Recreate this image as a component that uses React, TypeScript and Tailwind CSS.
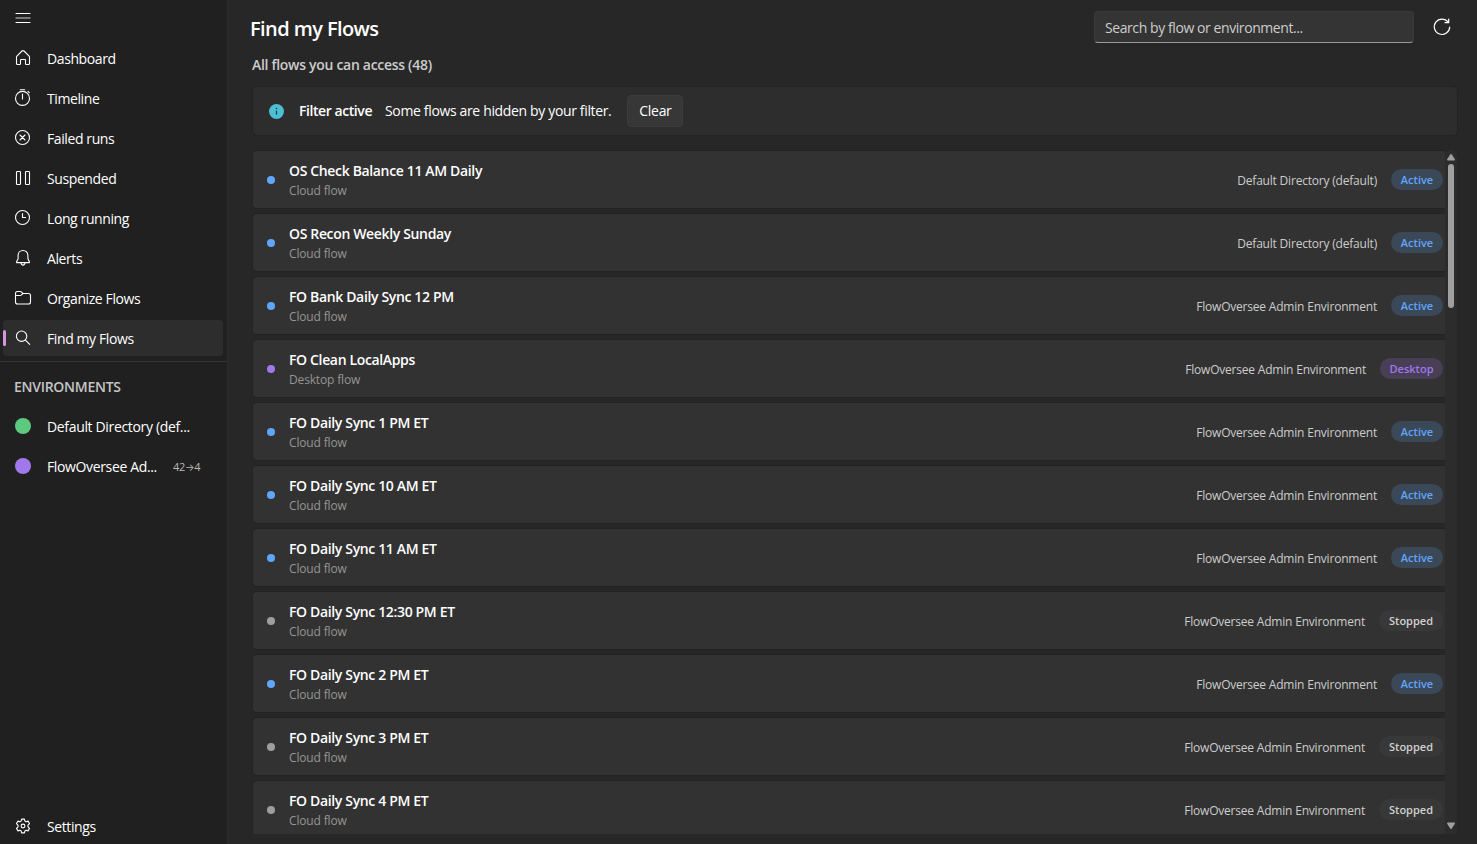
import type { ReactNode } from "react";

type FlowStatus = "Active" | "Stopped" | "Desktop";

interface Flow {
  name: string;
  environment: string;
  status: FlowStatus;
}

const ADMIN = "FlowOversee Admin Environment";

const flows: Flow[] = [
  { name: "OS Check Balance 11 AM Daily", environment: "Default Directory (default)", status: "Active" },
  { name: "OS Recon Weekly Sunday", environment: "Default Directory (default)", status: "Active" },
  { name: "FO Bank Daily Sync 12 PM", environment: ADMIN, status: "Active" },
  { name: "FO Clean LocalApps", environment: ADMIN, status: "Desktop" },
  { name: "FO Daily Sync 1 PM ET", environment: ADMIN, status: "Active" },
  { name: "FO Daily Sync 10 AM ET", environment: ADMIN, status: "Active" },
  { name: "FO Daily Sync 11 AM ET", environment: ADMIN, status: "Active" },
  { name: "FO Daily Sync 12:30 PM ET", environment: ADMIN, status: "Stopped" },
  { name: "FO Daily Sync 2 PM ET", environment: ADMIN, status: "Active" },
  { name: "FO Daily Sync 3 PM ET", environment: ADMIN, status: "Stopped" },
  { name: "FO Daily Sync 4 PM ET", environment: ADMIN, status: "Stopped" },
];

const dotColor: Record<FlowStatus, string> = {
  Active: "bg-[#60a5fa]",
  Stopped: "bg-[#9e9e9e]",
  Desktop: "bg-[#a078ec]",
};

const badgeStyle: Record<FlowStatus, string> = {
  Active: "w-[52px] bg-[#3b4858] text-[#60a5fa]",
  Stopped: "w-[64px] bg-[#383838] text-[#d0d0d0]",
  Desktop: "w-[63px] bg-[#483f56] text-[#a078ec]",
};

const Icon = ({ children }: { children: ReactNode }) => (
  <svg
    width="18"
    height="18"
    viewBox="0 0 18 18"
    fill="none"
    stroke="currentColor"
    strokeWidth="1.1"
    strokeLinecap="round"
    strokeLinejoin="round"
    className="shrink-0"
  >
    {children}
  </svg>
);

const navItems: { label: string; icon: ReactNode }[] = [
  {
    label: "Dashboard",
    icon: (
      <path d="M2.5 8.1c0-.5.2-.9.6-1.3L8 2c.6-.5 1.4-.5 2 0l4.9 4.8c.4.4.6.8.6 1.3v6.4c0 .6-.4 1-1 1h-2.2c-.5 0-.8-.4-.8-.8v-3.6c0-.4-.3-.6-.6-.6H7.1c-.3 0-.6.2-.6.6v3.6c0 .4-.3.8-.8.8H3.5c-.6 0-1-.4-1-1z" />
    ),
  },
  {
    label: "Timeline",
    icon: (
      <>
        <circle cx="8.5" cy="9.4" r="7" />
        <path d="M6.3.8h4.4M8.5 5v5M14 2.4l1.3 1.3" />
      </>
    ),
  },
  {
    label: "Failed runs",
    icon: (
      <>
        <circle cx="8.5" cy="8.5" r="7" />
        <path d="m6 6 5 5M11 6l-5 5" />
      </>
    ),
  },
  {
    label: "Suspended",
    icon: (
      <>
        <rect x="2.5" y="2.5" width="4" height="13" rx="0.8" />
        <rect x="11.5" y="2.5" width="4" height="13" rx="0.8" />
      </>
    ),
  },
  {
    label: "Long running",
    icon: (
      <>
        <circle cx="8.5" cy="8.5" r="7" />
        <path d="M8.5 4.5v4h3" />
      </>
    ),
  },
  {
    label: "Alerts",
    icon: (
      <>
        <path d="M9 1.5c-2.9 0-4.9 2.2-4.9 4.9v3.4l-1.5 3c-.2.4 0 .8.5.8h11.8c.5 0 .7-.4.5-.8l-1.5-3V6.4c0-2.7-2-4.9-4.9-4.9z" />
        <path d="M7 13.8c.1 1.4.9 2.3 2 2.3s1.9-.9 2-2.3" />
      </>
    ),
  },
  {
    label: "Organize Flows",
    icon: (
      <path d="M1.5 4.5c0-1.1.9-2 2-2h2.7c.4 0 .8.2 1.1.4L9 4.5h5.5c1.1 0 2 .9 2 2v6.5c0 1.1-.9 2-2 2h-11c-1.1 0-2-.9-2-2zM1.5 6.5h4.6c.4 0 .8-.2 1.1-.4L9 4.5" />
    ),
  },
  {
    label: "Find my Flows",
    icon: (
      <>
        <circle cx="7.6" cy="7.2" r="5.2" />
        <path d="m11.4 11.1 4.3 4.2" />
      </>
    ),
  },
];

const NavItem = ({ label, icon, selected }: { label: string; icon: ReactNode; selected?: boolean }) => (
  <button
    className={`relative flex h-9 w-[220px] items-center rounded-[4px] pl-[11px] text-left ${
      selected ? "bg-[#2d2d2d]" : ""
    }`}
  >
    {selected && <span className="absolute left-0 top-[10px] h-4 w-[3px] rounded-full bg-[#d596dc]" />}
    <Icon>{icon}</Icon>
    <span className="ml-[15px] mt-[2px] text-[14px] leading-5 tracking-[-0.4px]">{label}</span>
  </button>
);

const Sidebar = () => (
  <aside className="flex w-[227px] shrink-0 flex-col bg-[#202020] text-white">
    <div className="flex h-10 shrink-0 items-start pl-[14px] pt-[9px]">
      <Icon>
        <path d="M2 4.5h14M2 13.5h14" />
        <path d="M2 9h14" strokeOpacity="0.8" />
      </Icon>
    </div>
    <nav className="flex flex-col gap-1 pl-[3px]">
      {navItems.map((item) => (
        <NavItem key={item.label} {...item} selected={item.label === "Find my Flows"} />
      ))}
    </nav>
    <div className="mt-[5px] h-px shrink-0 bg-[#343434]" />
    <h2 className="mt-[15px] pl-[14px] text-[14px] font-semibold leading-5 tracking-[-0.27px] text-[#c5c5c5]">
      ENVIRONMENTS
    </h2>
    <div className="mt-[10px] flex h-10 items-center pl-[15px]">
      <span className="mb-[2px] h-4 w-4 rounded-full bg-[#5cc97f]" />
      <span className="ml-4 text-[14px] leading-5 tracking-[-0.34px]">Default Directory (def...</span>
    </div>
    <div className="flex h-10 items-center pl-[15px]">
      <span className="mb-[2px] h-4 w-4 rounded-full bg-[#a078ec]" />
      <span className="ml-4 w-[126px] text-[14px] leading-5 tracking-[-0.36px]">FlowOversee Ad...</span>
      <span className="text-[11px] tracking-[-0.3px] text-[#b8b8b8]">
        42<span className="font-['Inter',sans-serif] text-[10px]">→</span>4
      </span>
    </div>
    <div className="mt-auto pl-[3px]">
      <NavItem
        label="Settings"
        icon={
          <>
            <circle cx="9" cy="9" r="1.9" />
            <path d="M7.6 2.1h2.8l.5 2 1.1.6 2-.6 1.5 2.5L14 8.1v1.8l1.5 1.5-1.5 2.500-2-.6-1.1.6-.5 2H7.6l-.5-2-1.1-.6-2 .6-1.5-2.5L4 9.900V8.1L2.5 6.6 4 4.1l2 .6 1.1-.6z" />
          </>
        }
      />
    </div>
  </aside>
);

const FlowRow = ({ flow }: { flow: Flow }) => (
  <div className="flex h-[59px] shrink-0 items-center rounded-l-[5px] border border-r-0 border-[#232323] bg-[#323232] pl-[14px] pr-[2px]">
    <span className={`h-2 w-2 rounded-full ${dotColor[flow.status]}`} />
    <div className="ml-[14px] flex-1 pt-px">
      <div className="text-[14px] font-semibold leading-5 tracking-[-0.35px] text-white">{flow.name}</div>
      <div className="mt-[2px] text-[12px] leading-4 tracking-[-0.15px] text-[#959595]">
        {flow.status === "Desktop" ? "Desktop flow" : "Cloud flow"}
      </div>
    </div>
    <span className="mr-[14px] mt-[2px] text-[12px] tracking-[-0.2px] text-[#cccccc]">{flow.environment}</span>
    <span
      className={`flex h-[21px] items-center justify-center rounded-full pt-px text-[11px] font-semibold ${
        badgeStyle[flow.status]
      }`}
    >
      {flow.status}
    </span>
  </div>
);

const Scrollbar = () => (
  <div className="flex w-3 shrink-0 flex-col items-center rounded-t-[6px] bg-[#2c2c2c] pb-[5px] pt-[4px]">
    <svg width="8" height="7" viewBox="0 0 8 7" fill="#9f9f9f">
      <path d="M3.2.6a1 1 0 0 1 1.6 0L8 5.5l-.5 1h-7l-.5-1z" />
    </svg>
    <div className="mt-[3px] h-[144px] w-[6px] rounded-full bg-[#9f9f9f]" />
    <svg width="8" height="7" viewBox="0 0 8 7" fill="#9f9f9f" className="mt-auto">
      <path d="M3.2 6.4a1 1 0 0 0 1.6 0L8 1.5l-.5-1h-7l-.5 1z" />
    </svg>
  </div>
);

const App = () => {
  return (
    <div className="flex h-[844px] w-[1477px] overflow-hidden bg-[#272727] font-['Open_Sans',sans-serif]">
      <Sidebar />
      <main className="flex min-w-0 flex-1 flex-col border-l border-[#2b2b2b] pb-[10px] pl-6 pr-[19px]">
        {/* Title and search */}
        <header className="flex h-[54px] shrink-0 items-center">
          <h1 className="ml-[-2px] mt-[4px] text-[20px] font-semibold leading-7 tracking-[-0.58px] text-white">
            Find my Flows
          </h1>
          <input
            placeholder="Search by flow or environment..."
            className="ml-auto h-8 w-80 rounded-[4px] border border-[#393939] border-b-[#9a9a9a] bg-[#343434] px-[10px] text-[14px] leading-5 tracking-[-0.42px] text-white outline-none placeholder:text-[#cccccc]"
          />
          <button className="ml-[18px] mr-[6px] text-white">
            <svg
              width="20"
              height="20"
              viewBox="0 0 20 20"
              fill="none"
              stroke="currentColor"
              strokeWidth="1.2"
              strokeLinecap="round"
              strokeLinejoin="round"
            >
              <path d="M16.2 5.2A7.7 7.7 0 1 0 17.7 10M16.7 2v3.7H13" />
            </svg>
          </button>
        </header>

        <p className="text-[14px] font-semibold leading-[22px] tracking-[-0.3px] text-[#cccccc]">
          All flows you can access (48)
        </p>

        {/* Filter banner */}
        <div className="mt-[10px] flex h-[50px] shrink-0 items-center rounded-[5px] border border-[#232323] bg-[#2d2d2d] pl-[16px] text-[14px] leading-5 text-white">
          <svg width="15" height="15" viewBox="0 0 15 15">
            <circle cx="7.5" cy="7.5" r="7.5" fill="#4cbfd4" />
            <path d="M7.5 6.6v4" stroke="#22373b" strokeWidth="1.2" />
            <circle cx="7.5" cy="4.5" r="0.8" fill="#22373b" />
          </svg>
          <span className="ml-[15px] font-semibold tracking-[-0.43px]">Filter active</span>
          <span className="ml-[13px] tracking-[-0.35px]">Some flows are hidden by your filter.</span>
          <button className="ml-4 h-8 w-14 rounded-[4px] border border-[#3c3c3c] bg-[#373737] tracking-[-0.3px]">
            Clear
          </button>
        </div>

        {/* Flow list */}
        <div className="mr-px mt-[14px] flex min-h-0 flex-1 overflow-hidden">
          <div className="flex min-w-0 flex-1 flex-col gap-1 overflow-hidden">
            {flows.map((flow) => (
              <FlowRow key={flow.name} flow={flow} />
            ))}
          </div>
          <Scrollbar />
        </div>
      </main>
    </div>
  );
};

export default App;
